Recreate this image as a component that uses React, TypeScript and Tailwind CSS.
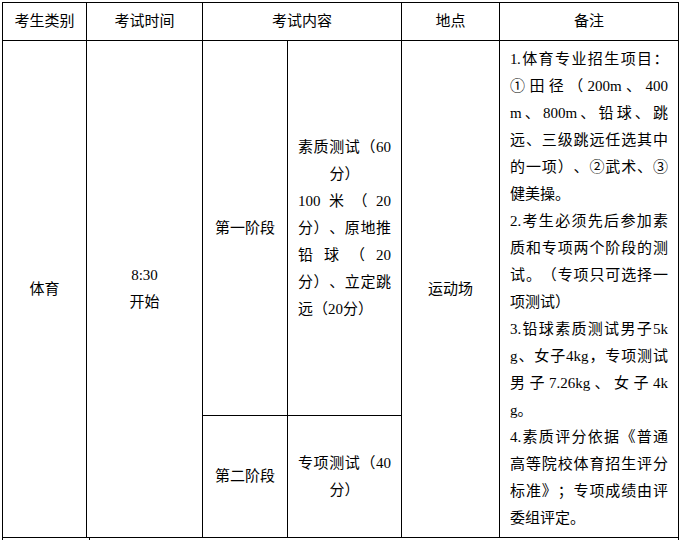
import type { ReactNode } from "react";

const FONT = "font-['Liberation_Serif','Noto_Sans_CJK_SC',serif]";

// each paragraph is given line by line so the breaks match the printed sheet
const NOTES: string[][] = [
  ["1.体育专业招生项目：", "①田径（200m、400", "m、800m、铅球、跳", "远、三级跳远任选其中", "的一项）、②武术、③", "健美操。"],
  ["2.考生必须先后参加素", "质和专项两个阶段的测", "试。（专项只可选择一", "项测试）"],
  ["3.铅球素质测试男子5k", "g、女子4kg，专项测试", "男子7.26kg、女子4k", "g。"],
  ["4.素质评分依据《普通", "高等院校体育招生评分", "标准》；专项成绩由评", "委组评定。"],
];

function Cell({ className = "", children }: { className?: string; children?: ReactNode }) {
  return (
    <div className={`border-r border-b border-black flex items-center justify-center ${className}`}>
      {children}
    </div>
  );
}

function Para({ lines, lastAlign = "text-left", tight }: { lines: string[]; lastAlign?: string; tight?: boolean }) {
  return (
    <>
      {lines.map((l, i) => {
        const last = i === lines.length - 1;
        return (
          <span
            key={i}
            className={
              last
                ? `block whitespace-nowrap ${lastAlign}`
                : `block whitespace-nowrap text-justify [text-align-last:justify] ${tight && i === 0 ? "tracking-[-0.45px]" : ""}`
            }
          >
            {l}
          </span>
        );
      })}
    </>
  );
}

export default function App() {
  return (
    <div className={`w-[681px] h-[540px] overflow-hidden bg-white pl-[2px] pt-[2px] text-black text-[15px] leading-[27px] [text-spacing-trim:space-all] ${FONT}`}>
      <div className="w-[677px] grid grid-cols-[84px_116px_85px_114px_98px_179px] grid-rows-[38px_375px_122px] border-l border-t border-black">
        <Cell>考生类别</Cell>
        <Cell>考试时间</Cell>
        <Cell className="col-span-2">考试内容</Cell>
        <Cell>地点</Cell>
        <Cell>备注</Cell>

        <Cell className="row-span-2">体育</Cell>
        <Cell className="row-span-2 flex-col">
          <span>8:30</span>
          <span>开始</span>
        </Cell>
        <Cell>第一阶段</Cell>
        <Cell className="px-[10px]">
          <div className="w-full">
            <Para lines={["素质测试（60", "分）"]} lastAlign="text-center" />
            <Para lines={["100米（20", "分）、原地推", "铅球（20", "分）、立定跳", "远（20分）"]} />
          </div>
        </Cell>
        <Cell className="row-span-2">运动场</Cell>
        <Cell className="row-span-2 pl-[10px] pr-[10px]">
          <div className="w-full">
            {NOTES.map((p, i) => (
              <Para key={i} lines={p} tight={i === 0} />
            ))}
          </div>
        </Cell>

        <Cell>第二阶段</Cell>
        <Cell className="px-[10px]">
          <div className="w-full">
            <Para lines={["专项测试（40", "分）"]} lastAlign="text-center" />
          </div>
        </Cell>
      </div>
      <div className="w-[677px] h-[30px] flex border-l border-r border-black">
        <div className="w-[87px] border-r border-black" />
      </div>
    </div>
  );
}
